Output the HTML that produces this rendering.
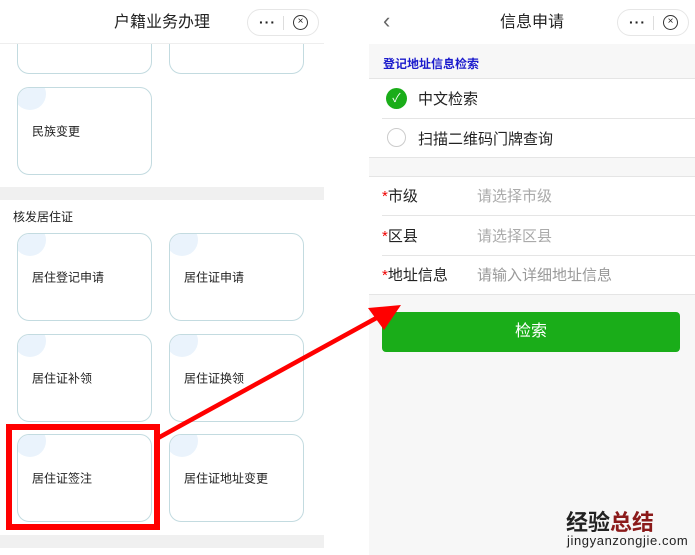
<!DOCTYPE html>
<html><head><meta charset="utf-8"><style>
*{margin:0;padding:0;box-sizing:border-box}
body{width:695px;height:555px;position:relative;overflow:hidden;background:#fff;font-family:"Liberation Sans","Noto Sans CJK SC",sans-serif;color:#222}
.a{position:absolute}
.card{position:absolute;width:135px;border:1px solid #c3dbe0;border-radius:12px;background:#fff;overflow:hidden;font-size:12px;color:#222}
.card:before{content:"";position:absolute;left:-4px;top:-10px;width:32px;height:32px;border-radius:50%;background:#eaf3fc}
.card span{position:absolute;left:14px;top:50%;transform:translateY(-50%)}
.cap{position:absolute;top:9px;width:72px;height:27px;border:1px solid #e6e6e6;border-radius:14px;background:#fff}
.cap .d{position:absolute;left:11px;top:4px;font-size:14px;font-weight:bold;letter-spacing:1px}
.cap .s{position:absolute;left:35px;top:6px;width:1px;height:14px;background:#ddd}
.cap .x{position:absolute;left:45px;top:5px;width:15px;height:15px;border:1.6px solid #333;border-radius:50%;font-size:10px;line-height:12px;text-align:center}
.row{position:absolute;left:369px;width:326px;background:#fff;font-size:15px}
.hl{position:absolute;height:1px;background:#e5e5e5}
</style></head><body>
<!-- left -->
<div class="a" style="left:0;top:0;width:324px;height:44px;border-bottom:1px solid #eee;background:#fff;z-index:2"></div>
<div class="a" style="left:0;top:12px;width:324px;text-align:center;font-size:16px;z-index:3;line-height:22px">户籍业务办理</div>
<div class="cap" style="left:247px;z-index:3"><div class="d">···</div><div class="s"></div><div class="x">×</div></div>
<div class="card" style="left:17px;top:20px;height:54px"></div>
<div class="card" style="left:169px;top:20px;height:54px"></div>
<div class="card" style="left:17px;top:87px;height:88px"><span>民族变更</span></div>
<div class="a" style="left:0;top:187px;width:324px;height:13px;background:#f0f0f0"></div>
<div class="a" style="left:13px;top:208px;font-size:12px">核发居住证</div>
<div class="card" style="left:17px;top:233px;height:88px"><span>居住登记申请</span></div>
<div class="card" style="left:169px;top:233px;height:88px"><span>居住证申请</span></div>
<div class="card" style="left:17px;top:334px;height:88px"><span>居住证补领</span></div>
<div class="card" style="left:169px;top:334px;height:88px"><span>居住证换领</span></div>
<div class="card" style="left:17px;top:434px;height:88px"><span>居住证签注</span></div>
<div class="card" style="left:169px;top:434px;height:88px"><span>居住证地址变更</span></div>
<div class="a" style="left:0;top:535px;width:324px;height:13px;background:#f0f0f0"></div>
<!-- right -->
<div class="a" style="left:369px;top:0;width:326px;height:555px;background:#f7f7f7"></div>
<div class="row" style="top:0;height:44px"></div>
<div class="a" style="left:383px;top:8px;font-size:22px;color:#666;line-height:26px">&lsaquo;</div>
<div class="a" style="left:369px;top:12px;width:326px;text-align:center;font-size:16px;line-height:22px">信息申请</div>
<div class="cap" style="left:617px"><div class="d">···</div><div class="s"></div><div class="x">×</div></div>
<div class="a" style="left:383px;top:55px;font-size:12px;font-weight:bold;color:#1a1acc">登记地址信息检索</div>
<div class="row" style="top:78px;height:80px;border-top:1px solid #e5e5e5;border-bottom:1px solid #e5e5e5"></div>
<div class="hl" style="left:382px;top:118px;width:313px"></div>
<div class="a" style="left:386px;top:88px;width:21px;height:21px;border-radius:50%;background:#1aad19;color:#fff;font-size:12px;text-align:center;line-height:21px">✓</div>
<div class="a" style="left:418px;top:88px;font-size:15px">中文检索</div>
<div class="a" style="left:387px;top:128px;width:19px;height:19px;border-radius:50%;border:1px solid #ccc;background:#fff"></div>
<div class="a" style="left:418px;top:128px;font-size:15px">扫描二维码门牌查询</div>
<div class="row" style="top:176px;height:119px;border-top:1px solid #e5e5e5;border-bottom:1px solid #e5e5e5"></div>
<div class="hl" style="left:382px;top:215px;width:313px"></div>
<div class="hl" style="left:382px;top:255px;width:313px"></div>
<div class="a" style="left:382px;top:185px;font-size:15px"><span style="color:#e00">*</span>市级</div>
<div class="a" style="left:477px;top:185px;font-size:15px;color:#aaa">请选择市级</div>
<div class="a" style="left:382px;top:225px;font-size:15px"><span style="color:#e00">*</span>区县</div>
<div class="a" style="left:477px;top:225px;font-size:15px;color:#aaa">请选择区县</div>
<div class="a" style="left:382px;top:264px;font-size:15px"><span style="color:#e00">*</span>地址信息</div>
<div class="a" style="left:477px;top:264px;font-size:15px;color:#999">请输入详细地址信息</div>
<div class="a" style="left:382px;top:312px;width:298px;height:40px;border-radius:4px;background:#1aad19;color:#fff;font-size:16px;text-align:center;line-height:40px">检索</div>
<div class="a" style="left:566px;top:505px;font-size:22px;font-weight:bold;color:#222;letter-spacing:0px">经验<span style="color:#8b1a1a">总结</span></div>
<div class="a" style="left:567px;top:533px;font-size:13px;color:#222;letter-spacing:0.6px">jingyanzongjie.com</div>
<!-- red annotation -->
<div class="a" style="left:6px;top:424px;width:154px;height:106px;border:6px solid #f00"></div>
<svg class="a" style="left:0;top:0" width="695" height="555"><line x1="158" y1="438" x2="380" y2="316" stroke="#f00" stroke-width="4.5"/><polygon points="401,305 368,308 384,330" fill="#f00"/></svg>
</body></html>
